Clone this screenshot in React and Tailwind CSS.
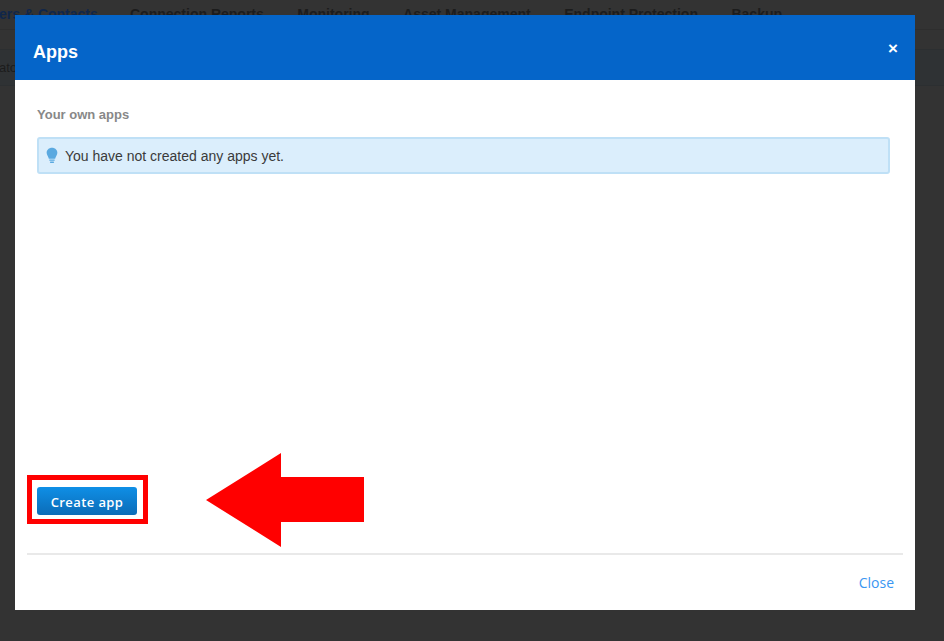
import React from 'react';

const navItems = ['Connection Reports', 'Monitoring', 'Asset Management', 'Endpoint Protection', 'Backup'];

const Bulb = () => (
  <svg width="12" height="17" viewBox="0 0 13 18" className="shrink-0">
    <path d="M6.5 0.5C3.2 0.5 0.7 2.9 0.7 5.9c0 2.6 1.9 3.9 2.4 6.6h6.8c0.5-2.7 2.4-4 2.4-6.6 0-3-2.5-5.4-5.8-5.4z" fill="#5aa9e0" />
    <rect x="3.4" y="13.2" width="6.2" height="1.6" rx="0.8" fill="#5aa9e0" />
    <rect x="4.2" y="15.4" width="4.6" height="1.8" rx="0.9" fill="#5aa9e0" />
  </svg>
);

const Arrow = () => (
  <svg width="158" height="94" viewBox="0 0 158 94" className="block">
    <polygon points="0,47 75,0 75,24 158,24 158,69 75,69 75,94" fill="#ff0000" />
  </svg>
);

export default function App() {
  return (
    <div className="relative h-[641px] w-[944px] overflow-hidden bg-[#333333] font-['Liberation_Sans',sans-serif]">
      {/* page behind the overlay */}
      <div className="flex h-[30px] items-start border-b border-[#2e2e2e] pt-[6px] text-[14px] font-bold leading-4 text-[#1c1c1c]">
        <span className="w-[130px] whitespace-nowrap text-[#10264a]">
          <span className="ml-[-1px]">ers &amp; Contacts</span>
        </span>
        <div className="flex gap-[33.5px] whitespace-nowrap">
          {navItems.map((item) => (
            <span key={item}>{item}</span>
          ))}
        </div>
      </div>
      <div className="h-[20px] border-b border-[#2c2f31]" />
      <div className="flex h-[36px] items-center border-b border-[#2c2f31] bg-[#2f3234] text-[13px] text-[#1c1c1c]">
        <span className="ml-[-22px]">Creato</span>
      </div>

      {/* modal */}
      <div className="absolute left-[15px] top-[15px] flex h-[595px] w-[900px] flex-col bg-white">
        <div className="flex h-[65px] shrink-0 items-start justify-between bg-[#0565c9] pl-[18px] pr-[17px]">
          <h2 className="mt-[25px] text-[18px] font-bold leading-6 text-white">Apps</h2>
          <span className="mt-[28px] text-[17px] font-bold leading-3 text-white">×</span>
        </div>
        <div className="flex flex-1 flex-col px-[12px]">
          <div className="flex-1 pl-[10px] pr-[13px] pt-[27px]">
            <p className="text-[13px] font-bold leading-4 text-[#888888]">Your own apps</p>
            <div className="mt-[14px] flex h-[37px] items-center gap-[7px] rounded-[3px] border-2 border-[#bfe0f6] bg-[#dbeefc] pl-[7px] text-[14px] text-[#3a3a3a]">
              <Bulb />
              <span className="pt-[2px]">You have not created any apps yet.</span>
            </div>
          </div>
          <div className="flex items-start">
            <div className="mt-[22px] border-[5px] border-[#ff0000] pb-[4px] pl-[5px] pr-[6px] pt-[7px]">
              <button className="block h-[28px] w-[100px] rounded-[3px] bg-gradient-to-b from-[#0f8fe6] to-[#0b6cb8] pt-[3px] font-['Open_Sans',sans-serif] text-[13px] font-semibold tracking-[0.4px] text-white">
                Create app
              </button>
            </div>
            <div className="ml-[58px]">
              <Arrow />
            </div>
          </div>
          <div className="mt-[6px] h-[2px] bg-[#e9e9e9]" />
          <div className="flex h-[55px] items-start justify-end pr-[9px] pt-[20px]">
            <a className="font-['Open_Sans',sans-serif] text-[14px] leading-4 text-[#3a96f2]">Close</a>
          </div>
        </div>
      </div>
    </div>
  );
}
